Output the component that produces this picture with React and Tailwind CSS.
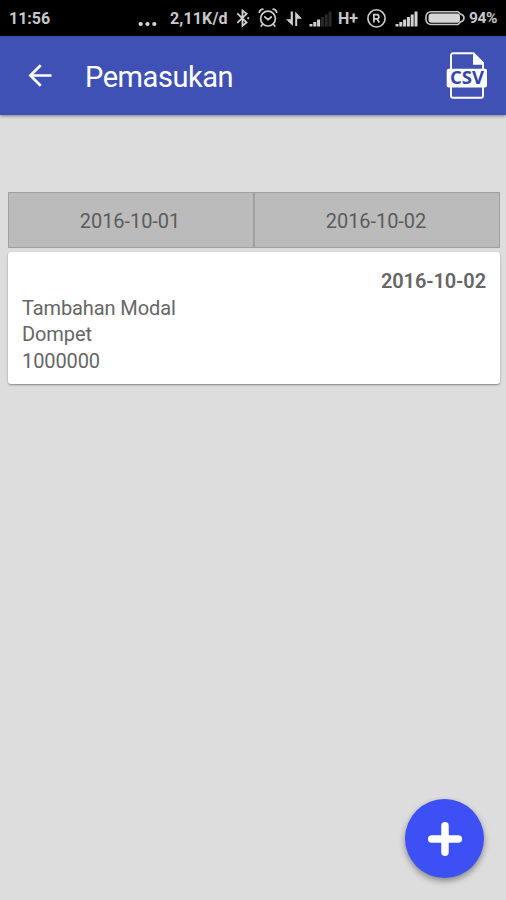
const dates = ["2016-10-01", "2016-10-02"];

const incomes = [
  { date: "2016-10-02", name: "Tambahan Modal", wallet: "Dompet", amount: 1000000 },
];

function Signal({ level }) {
  const bars = [2.5, 4.5, 7, 9.5, 12, 15];
  return (
    <svg className="block h-[36px] w-[24px]" viewBox="0 0 24 36">
      {bars.map((h, i) => (
        <rect key={i} x={0.5 + i * 3.8} y={26.5 - h} width="3" height={h} fill={i < level ? "#d2d2d2" : "#2a2a2a"} />
      ))}
    </svg>
  );
}

function StatusBar() {
  return (
    <div className="flex h-[36px] items-center bg-black text-[16px] font-bold whitespace-nowrap text-[#c8c8c8]">
      <span className="ml-[9px] w-[129px] pt-[2px]">11:56</span>
      <svg className="block h-[36px] w-[20px]" viewBox="0 0 20 36" fill="#d8d8d8">
        <circle cx="2.7" cy="24" r="2.1" />
        <circle cx="9.5" cy="24" r="2.1" />
        <circle cx="16.3" cy="24" r="2.1" />
      </svg>
      <span className="ml-[12px] w-[66px] pt-[2px] tracking-[0.15px]">2,11K/d</span>
      <svg className="block h-[36px] w-[14px]" viewBox="0 0 14 36" fill="none" stroke="#cfcfcf" strokeWidth="1.8">
        <path d="M1.3 13.4 10.6 22.5 6.5 25.8V10.6L10.6 13.8 1.3 22.8" />
        <path d="M12.2 17.2v2" />
      </svg>
      <svg className="ml-[8px] block h-[36px] w-[20px]" viewBox="0 0 20 36" fill="none" stroke="#cfcfcf" strokeWidth="1.7" strokeLinecap="round">
        <circle cx="10" cy="18.6" r="7.4" />
        <path d="M6.8 16.8 10 19.6 13.3 17M1.3 12.3C1.800 10.500 3 9.500 4.800 9.200M18.700 12.300C18.200 10.500 17 9.500 15.200 9.200M4.700 24.200 3.200 26M15.300 24.200l1.500 1.800" />
      </svg>
      <svg className="ml-[7px] block h-[36px] w-[17px]" viewBox="0 0 17 36" fill="#cfcfcf">
        <path d="M5.700 11.500H7.900V26L1 19.300H5.700Z" />
        <path d="M10.200 26H12.200V18.800H17L10.200 11.500Z" />
      </svg>
      <div className="ml-[7px]"><Signal level={3} /></div>
      <span className="ml-[5px] w-[27px] pt-[2px]">H+</span>
      <svg className="ml-[1px] block h-[36px] w-[22px]" viewBox="0 0 22 36" fill="none" stroke="#cfcfcf">
        <circle cx="10.500" cy="18.400" r="8.600" strokeWidth="1.600" />
        <path d="M7.900 22.500V14.600h2.900a2.100 2.100 0 0 1 0 4.200H7.900M10.900 18.800 13.300 22.500" strokeWidth="1.700" />
      </svg>
      <div className="ml-[7px]"><Signal level={6} /></div>
      <svg className="ml-[6px] block h-[36px] w-[40px]" viewBox="0 0 40 36">
        <path d="M6 11.700h27l2.500 2.400c2.300.6 3.500 2 3.500 3.900s-1.200 3.300-3.500 3.900L33 24.500H6a5 5 0 0 1-5-5v-2.800a5 5 0 0 1 5-5Z" fill="none" stroke="#c4c4c4" strokeWidth="1.600" />
        <rect x="3.500" y="13.500" width="31.500" height="9.300" rx="3" fill="#d6d6d6" />
      </svg>
      <span className="ml-[4px] pt-[2px] text-[15.500px] tracking-[-0.400px]">94%</span>
    </div>
  );
}

function CsvIcon() {
  return (
    <svg className="block h-[48px] w-[42px]" viewBox="0 0 42 48">
      <path d="M5 17V3.300Q5 1.300 7 1.300H27.500L37 11V17M5 34V43.700Q5 45.700 7 45.700H35Q37 45.700 37 43.700V34" fill="none" stroke="#fff" strokeWidth="1.900" />
      <path d="M27 1V12.700H38Z" fill="#fff" />
      <rect x="0.700" y="16.800" width="40.300" height="18.700" rx="2" fill="#fff" />
      <text x="4" y="32" textLength="34" lengthAdjust="spacingAndGlyphs" fontSize="18" fontWeight="700" fill="#3546a8" className="font-['Open_Sans',sans-serif]">
        CSV
      </text>
    </svg>
  );
}

function Header() {
  return (
    <header className="relative flex h-[79px] items-center bg-[#3f51b5] text-white shadow-[0_1px_3px_rgba(0,0,0,0.45)]">
      <svg className="ml-[28px] block h-[24px] w-[24px]" viewBox="0 0 24 24" fill="none" stroke="#fff" strokeWidth="2.700">
        <path d="M23.500 11.500H2.500M12.700 1.200 2.400 11.500 12.700 21.800" />
      </svg>
      <h1 className="ml-[33px] flex-1 pt-[3px] text-[29px] leading-[34px] tracking-[-0.450px]">Pemasukan</h1>
      <div className="mr-[18px]"><CsvIcon /></div>
    </header>
  );
}

function IncomeCard({ item }) {
  return (
    <div className="mt-[4px] h-[132px] rounded-[3px] bg-white px-[14px] pt-[16px] text-[20px] leading-[26.700px] tracking-[-0.100px] text-[#666] shadow-[0_1px_2px_rgba(0,0,0,0.4)]">
      <p className="text-right font-semibold tracking-[-0.100px]">{item.date}</p>
      <p>{item.name}</p>
      <p>{item.wallet}</p>
      <p>{item.amount}</p>
    </div>
  );
}

export default function App() {
  return (
    <div className="flex h-[900px] w-[506px] flex-col overflow-hidden bg-[#dddddd] font-[Roboto,sans-serif]">
      <StatusBar />
      <Header />
      <main className="flex-1 pt-[77px] pr-[6px] pl-[8px]">
        <div className="grid h-[56px] grid-cols-2">
          {dates.map((date) => (
            <button key={date} className="border border-[#a0a0a0] bg-[#bbbbbb] pt-[2px] pr-[2px] text-[20px] tracking-[-0.050px] text-[#5c5c5c]">
              {date}
            </button>
          ))}
        </div>
        {incomes.map((item, i) => (
          <IncomeCard key={i} item={item} />
        ))}
      </main>
      <footer className="flex justify-end pr-[22px] pb-[22px]">
        <button className="flex h-[79px] w-[79px] items-center justify-center rounded-full bg-[#3d50f5] shadow-[0_3px_6px_rgba(0,0,0,0.4)]">
          <svg className="block h-[36px] w-[36px]" viewBox="0 0 36 36" stroke="#fff" strokeWidth="7.500" strokeLinecap="round">
            <path d="M18 4.700V31.300M4.700 18H31.300" />
          </svg>
        </button>
      </footer>
    </div>
  );
}
